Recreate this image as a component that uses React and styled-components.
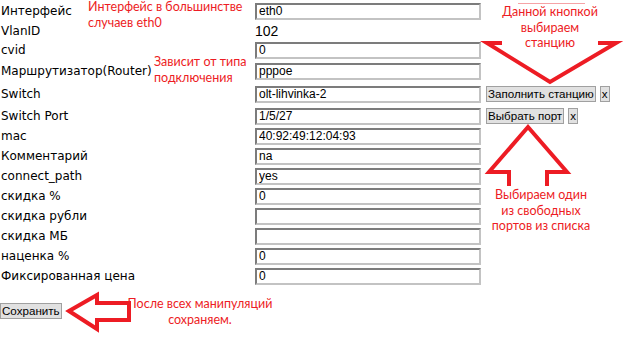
import React from 'react';
import styled, { createGlobalStyle } from 'styled-components';

const GlobalStyle = createGlobalStyle`
  html, body {
    margin: 0;
    padding: 0;
    background: #ffffff;
  }
  body {
    width: 624px;
    height: 340px;
    overflow: hidden;
  }
`;

const RED = '#ed1c24';

const rows = [
  { label: 'Интерфейс', value: 'eth0', h: 22 },
  { label: 'VlanID', text: '102', h: 18 },
  { label: 'cvid', value: '0', h: 20 },
  { label: 'Маршрутизатор(Router)', value: 'pppoe', h: 22 },
  { label: 'Switch', value: 'olt-lihvinka-2', h: 24, button: 'Заполнить станцию' },
  { label: 'Switch Port', value: '1/5/27', h: 20, button: 'Выбрать порт' },
  { label: 'mac', value: '40:92:49:12:04:93', h: 20 },
  { label: 'Комментарий', value: 'na', h: 20 },
  { label: 'connect_path', value: 'yes', h: 20 },
  { label: 'скидка %', value: '0', h: 20 },
  { label: 'скидка рубли', value: '', h: 20 },
  { label: 'скидка МБ', value: '', h: 20 },
  { label: 'наценка %', value: '0', h: 20 },
  { label: 'Фиксированная цена', value: '0', h: 20 },
];

const Page = () => (
  <Screen>
    <GlobalStyle />
    <Form>
      {rows.map((r) => (
        <Row key={r.label} $h={r.h}>
          <Label>{r.label}</Label>
          {r.text ? (
            <Plain>{r.text}</Plain>
          ) : (
            <Field defaultValue={r.value} />
          )}
          {r.button && (
            <Actions>
              <Btn>{r.button}</Btn>
              <Btn>x</Btn>
            </Actions>
          )}
        </Row>
      ))}
      <SaveRow>
        <Btn>Сохранить</Btn>
      </SaveRow>
    </Form>

    <Note $x={88} $y={-1} $w={150} $align="left">
      Интерфейс в большинстве<br />случаев eth0
    </Note>
    <Note $x={154} $y={54} $w={100} $align="left">
      Зависит от типа<br />подключения
    </Note>
    <Faint />
    <Note $x={490} $y={4} $w={120} $align="center">
      Данной кнопкой<br />выбираем<br />станцию
    </Note>
    <Note $x={480} $y={187} $w={122} $align="center">
      Выбираем один<br />из свободных<br />портов из списка
    </Note>
    <Note $x={120} $y={296} $w={160} $align="center">
      После всех манипуляций<br />сохраняем.
    </Note>

    <Arrows width="624" height="340" viewBox="0 0 624 340">
      <g fill="none" stroke={RED} strokeWidth="4" strokeLinejoin="miter">
        <polyline points="502,43 487,43 550,82 616,43 598,43" />
        <polyline points="509,186 509,172 489,172 528,127 567,172 547,172 547,186" />
        <polygon points="69,311 97,295 97,303 129,303 129,320 97,320 97,329" />
      </g>
    </Arrows>
  </Screen>
);

const Screen = styled.div`
  position: relative;
  width: 624px;
  height: 340px;
  background: #fff;
  overflow: hidden;
`;

const Form = styled.div`
  display: flex;
  flex-direction: column;
`;

const Row = styled.div`
  display: grid;
  grid-template-columns: 255px 226px auto;
  align-items: center;
  height: ${(p) => p.$h}px;
`;

const Label = styled.span`
  font-family: "DejaVu Sans", Verdana, sans-serif;
  font-size: 12px;
  color: #000;
  white-space: nowrap;
  padding-left: 1px;
`;

const Plain = styled.span`
  font-family: "Liberation Sans", Arial, sans-serif;
  font-size: 14px;
  color: #000;
`;

const Field = styled.input`
  box-sizing: border-box;
  width: 226px;
  height: 17px;
  margin: 0;
  padding: 0 2px;
  font-family: "Liberation Sans", Arial, sans-serif;
  font-size: 12px;
  color: #000;
  background: #fff;
  border-style: solid;
  border-width: 2px;
  border-color: #7c7c7c #c3c3c3 #c3c3c3 #7c7c7c;
  outline: none;
`;

const Actions = styled.div`
  display: flex;
  align-items: center;
  gap: 4px;
  padding-left: 5px;
`;

const Btn = styled.button`
  box-sizing: border-box;
  height: 16px;
  margin: 0;
  padding: 0 1px;
  font-family: "Liberation Sans", Arial, sans-serif;
  font-size: 11.6px;
  line-height: 12px;
  color: #000;
  background: #e1e1e1;
  border: 1px solid #a0a0a0;
  border-radius: 0;
  white-space: nowrap;
`;

const SaveRow = styled.div`
  display: flex;
  padding-top: 17px;
`;

const Note = styled.div`
  position: absolute;
  left: ${(p) => p.$x}px;
  top: ${(p) => p.$y}px;
  width: ${(p) => p.$w}px;
  text-align: ${(p) => p.$align};
  font-family: Lato, "Noto Sans", sans-serif;
  font-size: 12.5px;
  line-height: 15.5px;
  color: ${RED};
  white-space: nowrap;
`;

const Faint = styled.div`
  position: absolute;
  left: 518px;
  top: 3px;
  width: 67px;
  height: 1px;
  background: #f6a3a6;
`;

const Arrows = styled.svg`
  position: absolute;
  left: 0;
  top: 0;
  pointer-events: none;
`;

export default function App() {
  return <Page />;
}
